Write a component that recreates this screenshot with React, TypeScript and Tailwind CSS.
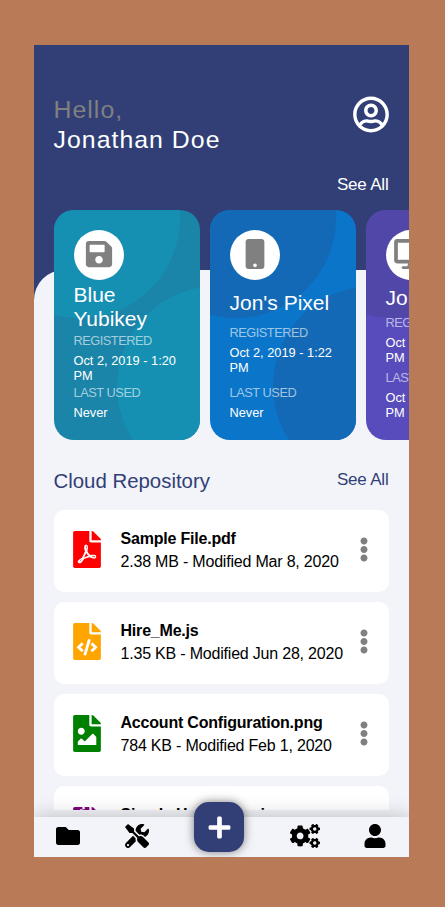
import { FaSave, FaMobile, FaDesktop, FaFilePdf, FaFileCode, FaFileImage, FaFileArchive, FaFolder, FaTools, FaCogs, FaUser, FaPlus, FaRegUserCircle, FaEllipsisV } from "react-icons/fa";
import type { IconType } from "react-icons";

type Device = {
  name: string;
  registered: string;
  lastUsed: string;
  Icon: IconType;
  iconClass: string;
  card: string;
  circle: string;
};

const devices: Device[] = [
  { name: "Blue Yubikey", registered: "Oct 2, 2019 - 1:20 PM", lastUsed: "Never", Icon: FaSave, iconClass: "size-[30px]", card: "bg-[#1b84a9]", circle: "bg-[#1590b3]" },
  { name: "Jon's Pixel", registered: "Oct 2, 2019 - 1:22 PM", lastUsed: "Never", Icon: FaMobile, iconClass: "size-[30px]", card: "bg-[#0a75c9]", circle: "bg-[#1369b5]" },
  { name: "Jon's iMac", registered: "Oct 2, 2019 - 1:25 PM", lastUsed: "Oct 5, 2019 - 9:14 PM", Icon: FaDesktop, iconClass: "w-[34px] h-[30px]", card: "bg-[#584cbc]", circle: "bg-[#5047a9]" },
];

const files = [
  { name: "Sample File.pdf", info: "2.38 MB - Modified Mar 8, 2020", Icon: FaFilePdf, color: "text-[#ff0000]" },
  { name: "Hire_Me.js", info: "1.35 KB - Modified Jun 28, 2020", Icon: FaFileCode, color: "text-[#ffa500]" },
  { name: "Account Configuration.png", info: "784 KB - Modified Feb 1, 2020", Icon: FaFileImage, color: "text-[#008000]" },
  { name: "Simple Homepage.js", info: "12 MB - Modified Jan 4, 2020", Icon: FaFileArchive, color: "text-[#800080]" },
];

function DeviceCard({ name, registered, lastUsed, Icon, iconClass, card, circle }: Device) {
  return (
    <div className={`relative h-[230px] w-[146px] shrink-0 overflow-hidden rounded-[20px] ${card}`}>
      <div className={`absolute -left-[74px] -top-[92px] size-[200px] rounded-full ${circle}`} />
      <div className={`absolute left-[63px] top-[76px] size-[200px] rounded-full ${circle}`} />
      <div className="relative flex h-full flex-col justify-between p-5 text-white">
        <div className="flex size-[50px] items-center justify-center rounded-full bg-white pb-[2px]">
          <Icon className={`text-[#808080] ${iconClass}`} />
        </div>
        <h2 className="text-[21px] leading-6">{name}</h2>
        <div className="text-[12.8px] leading-[15px]">
          <p className="mb-[5px] leading-[14px] tracking-[-0.5px] text-white/60">REGISTERED</p>
          <p>{registered}</p>
        </div>
        <div className="text-[12.8px] leading-[15px]">
          <p className="mb-[5px] leading-[14px] tracking-[-0.45px] text-white/60">LAST USED</p>
          <p>{lastUsed}</p>
        </div>
      </div>
    </div>
  );
}

export default function App() {
  return (
    <div className="flex h-[907px] w-[445px] items-center justify-center bg-[#b97a57] pb-[5px] pr-[3px] font-['Liberation_Sans',Arial,sans-serif]">
      <main className="flex h-[812px] w-[375px] flex-col overflow-hidden bg-[#313f76]">
        <header className="flex h-[165px] shrink-0 flex-col px-5 pt-[50px]">
          <div className="flex justify-between">
            <h1 className="text-[24.8px] leading-[30px] tracking-[1.05px] text-white">
              <span className="block text-[#808080]">Hello,</span>
              Jonathan Doe
            </h1>
            <FaRegUserCircle className="mt-[1px] size-[37px] translate-x-[0.5px] text-white" />
          </div>
          <a className="mt-5 self-end text-[17px] leading-5 tracking-[-0.2px] text-white">See All</a>
        </header>
        <div className="relative flex min-h-0 grow flex-col">
          <div className="absolute inset-x-0 bottom-0 top-[60px] rounded-tl-[30px] bg-[#f3f4f9]" />
          <section className="relative flex shrink-0 gap-[10px] overflow-hidden pl-5">
            {devices.map((device) => <DeviceCard key={device.name} {...device} />)}
          </section>
          <section className="relative flex min-h-0 grow flex-col overflow-hidden px-5">
            <div className="flex shrink-0 items-start justify-between pb-[17px] pt-[29px] text-[#313f76]">
              <h2 className="text-[20.4px] leading-6">Cloud Repository</h2>
              <a className="pt-px text-[17px] leading-5 tracking-[-0.2px]">See All</a>
            </div>
            <div className="flex min-h-0 grow flex-col gap-[10px] overflow-hidden">
              {files.map(({ name, info, Icon, color }) => (
                <article key={name} className="flex h-[82px] shrink-0 items-center rounded-[10px] bg-white px-[15px] pb-[3px]">
                  <Icon className={`h-[37px] w-9 shrink-0 ${color}`} />
                  <div className="ml-4 grow whitespace-nowrap text-[16px] leading-[23px] tracking-[-0.2px] text-black">
                    <h3 className="font-bold">{name}</h3>
                    <p>{info}</p>
                  </div>
                  <FaEllipsisV className="h-[25px] w-5 shrink-0 text-[#808080]" />
                </article>
              ))}
            </div>
            <div className="h-[7px] shrink-0" />
          </section>
          <nav className="relative flex h-10 shrink-0 items-center bg-[#f3f4f9] pb-[2px] shadow-[0_0_20px_rgba(0,0,0,0.25)]">
            <FaFolder className="ml-[22px] size-6 shrink-0" />
            <FaTools className="ml-[45px] size-6 shrink-0" />
            <button className="-mt-[18px] ml-[45px] flex size-[50px] shrink-0 items-center justify-center rounded-[15px] bg-[#313f76] pl-[2px] shadow-[0_0_10px_rgba(0,0,0,0.5)]">
              <FaPlus className="size-[25px] text-white" />
            </button>
            <FaCogs className="ml-[46px] h-6 w-[30px] shrink-0" />
            <FaUser className="ml-[43px] size-6 shrink-0" />
          </nav>
        </div>
      </main>
    </div>
  );
}
